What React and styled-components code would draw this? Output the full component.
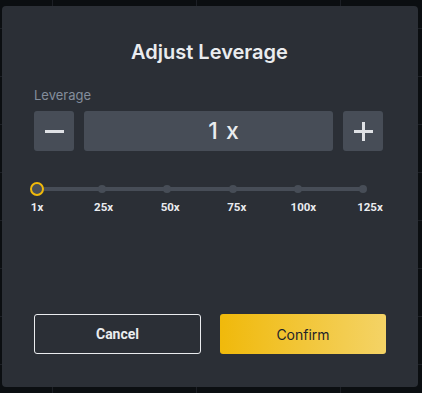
import React, { useState } from 'react';
import styled, { createGlobalStyle } from 'styled-components';

const GlobalStyle = createGlobalStyle`
  html, body {
    margin: 0;
    padding: 0;
  }
  body {
    width: 422px;
    height: 393px;
    overflow: hidden;
    background-color: #0b0e11;
    background-image:
      linear-gradient(to right, #1c1f25 1px, transparent 1px),
      linear-gradient(to bottom, #1c1f25 1px, transparent 1px);
    background-size: 144px 48px, 144px 48px;
    background-position: 52px 0, 0 28px;
    font-family: Inter, "Noto Sans", sans-serif;
  }
`;

const Modal = styled.div`
  box-sizing: border-box;
  width: 416px;
  height: 381px;
  margin: 6px 0 0 2px;
  padding: 33px 33px 33px 32px;
  background: #2b2f36;
  border-radius: 4px;
  display: flex;
  flex-direction: column;
`;

const Title = styled.h2`
  margin: 0;
  text-align: center;
  font-size: 20px;
  line-height: 26px;
  font-weight: 600;
  color: #eaecef;
`;

const Label = styled.div`
  margin-top: 21px;
  font-size: 13px;
  line-height: 18px;
  color: #848e9c;
`;

const Stepper = styled.div`
  margin-top: 7px;
  display: grid;
  grid-template-columns: 40px 1fr 40px;
  gap: 10px;
  width: 349px;
`;

const StepButton = styled.button`
  height: 40px;
  padding: 0;
  border: none;
  border-radius: 3px;
  background: #474d57;
  display: flex;
  align-items: center;
  justify-content: center;
  cursor: pointer;
`;

const ValueBox = styled.div`
  height: 40px;
  border-radius: 3px;
  background: #474d57;
  display: flex;
  align-items: center;
  justify-content: center;
  font-size: 23px;
  font-weight: 500;
  color: #eaecef;
  padding-left: 30px;
  word-spacing: 2px;
`;

const Track = styled.div`
  position: relative;
  margin: 31px 22px 0 3px;
  height: 14px;
  display: flex;
  align-items: center;
  justify-content: space-between;

  &::before {
    content: '';
    position: absolute;
    left: 0;
    right: 0;
    top: 5px;
    height: 4px;
    background: #474d57;
  }
`;

const Mark = styled.div`
  position: relative;
  width: 0;
  display: flex;
  justify-content: center;
`;

const Dot = styled.span`
  box-sizing: border-box;
  width: ${p => (p.$active ? '14px' : '8px')};
  height: ${p => (p.$active ? '14px' : '8px')};
  flex: none;
  border-radius: 50%;
  background: #474d57;
  border: ${p => (p.$active ? '2px solid #f0b90b' : 'none')};
`;

const Labels = styled.div`
  margin: 4px 15px 0 3px;
  display: flex;
  justify-content: space-between;
`;

const MarkLabel = styled.span`
  width: 0;
  display: flex;
  justify-content: center;
  white-space: nowrap;
  font-family: Roboto, "Liberation Sans", sans-serif;
  font-size: 11.5px;
  line-height: 14px;
  font-weight: 700;
  color: #eaecef;
`;

const Actions = styled.div`
  margin-top: auto;
  display: grid;
  grid-template-columns: 167px 166px;
  gap: 19px;
`;

const ActionButton = styled.button`
  box-sizing: border-box;
  height: 40px;
  border-radius: 3px;
  font-size: 14px;
  cursor: pointer;
  font-family: ${p => (p.$primary ? 'Inter, sans-serif' : 'Roboto, "Liberation Sans", sans-serif')};
  font-weight: ${p => (p.$primary ? 400 : 700)};
  color: ${p => (p.$primary ? '#1e2329' : '#eaecef')};
  border: ${p => (p.$primary ? 'none' : '1px solid #eaecef')};
  background: ${p => (p.$primary ? 'linear-gradient(to right, #f0b90b, #f4d366)' : 'transparent')};
`;

const marks = [1, 25, 50, 75, 100, 125];

const App = () => {
  const [value] = useState(1);

  return (
    <>
      <GlobalStyle />
      <Modal>
        <Title>Adjust Leverage</Title>
        <Label>Leverage</Label>
        <Stepper>
          <StepButton aria-label="decrease">
            <svg width="19" height="3" viewBox="0 0 19 3">
              <rect x="0" y="0" width="19" height="3" fill="#dfe1e5" />
            </svg>
          </StepButton>
          <ValueBox>{value} x</ValueBox>
          <StepButton aria-label="increase">
            <svg width="19" height="19" viewBox="0 0 19 19">
              <rect x="0" y="8" width="19" height="3" fill="#dfe1e5" />
              <rect x="8" y="0" width="3" height="19" fill="#dfe1e5" />
            </svg>
          </StepButton>
        </Stepper>
        <Track>
          {marks.map(m => (
            <Mark key={m}>
              <Dot $active={m === value} />
            </Mark>
          ))}
        </Track>
        <Labels>
          {marks.map(m => (
            <MarkLabel key={m}>{m}x</MarkLabel>
          ))}
        </Labels>
        <Actions>
          <ActionButton>Cancel</ActionButton>
          <ActionButton $primary>Confirm</ActionButton>
        </Actions>
      </Modal>
    </>
  );
};

export default App;
